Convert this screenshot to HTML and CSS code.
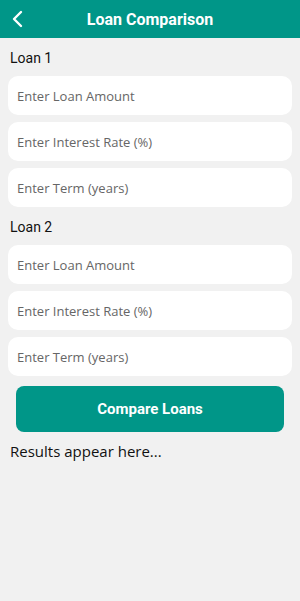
FILE: index.html
```html
<!DOCTYPE html>
<html lang="en">
<head>
    <meta charset="UTF-8">
    <meta name="viewport" content="width=device-width, initial-scale=1.0">
    <title>Loan Comparison</title>
    <link rel="stylesheet" href="styles.css">
</head>
<body>

    <div class="header">
        <button class="back-btn" aria-label="Back">
            <svg width="14" height="18" viewBox="0 0 14 18">
                <path d="M10 2 L3 9 L10 16" fill="none" stroke="#fff" stroke-width="2.4" stroke-linecap="round" stroke-linejoin="round"/>
            </svg>
        </button>
        <h1>Loan Comparison</h1>
    </div>

    <div class="container">
        <!-- Loan 1 -->
        <p class="label">Loan 1</p>
        <input type="number" id="amount1" placeholder="Enter Loan Amount">
        <input type="number" id="rate1" placeholder="Enter Interest Rate (%)">
        <input type="number" id="term1" placeholder="Enter Term (years)">

        <!-- Loan 2 -->
        <p class="label label-second">Loan 2</p>
        <input type="number" id="amount2" placeholder="Enter Loan Amount">
        <input type="number" id="rate2" placeholder="Enter Interest Rate (%)">
        <input type="number" id="term2" placeholder="Enter Term (years)">

        <button class="compare-btn">Compare Loans</button>

        <p class="result" id="result">Results appear here...</p>
    </div>

</body>
</html>
```

FILE: styles.css
```css
body {
    margin: 0;
    background-color: #f1f1f1;
    font-family: 'Roboto', sans-serif;
    color: #111;
}

.header {
    position: relative;
    height: 38px;
    background-color: #009688;
    display: flex;
    align-items: center;
    justify-content: center;
}

.header h1 {
    margin: 0;
    color: white;
    font-size: 16px;
    font-weight: 700;
}

.back-btn {
    position: absolute;
    left: 11px;
    top: 10px;
    background: none;
    border: none;
    padding: 0;
    display: flex;
}

.container {
    padding: 10px 8px;
    display: flex;
    flex-direction: column;
}

.label {
    margin: 0 0 8px 2px;
    font-size: 14px;
    line-height: 20px;
}

.label-second {
    margin-top: 3px;
}

input {
    height: 39px;
    box-sizing: border-box;
    margin: 0 0 7px 0;
    padding: 0 9px;
    border: none;
    border-radius: 10px;
    background: white;
    font-family: 'Open Sans', sans-serif;
    font-size: 13px;
    color: #333;
    outline: none;
}

input:last-of-type {
    margin-bottom: 0;
}

input::placeholder {
    color: #666;
}

.compare-btn {
    margin: 10px 8px 0 8px;
    height: 46px;
    background-color: #009688;
    color: white;
    border: none;
    border-radius: 8px;
    font-family: 'Roboto', sans-serif;
    font-size: 15px;
    font-weight: 700;
}

.result {
    margin: 9px 0 0 2px;
    font-family: 'Open Sans', sans-serif;
    font-size: 15px;
    line-height: 20px;
}
```
